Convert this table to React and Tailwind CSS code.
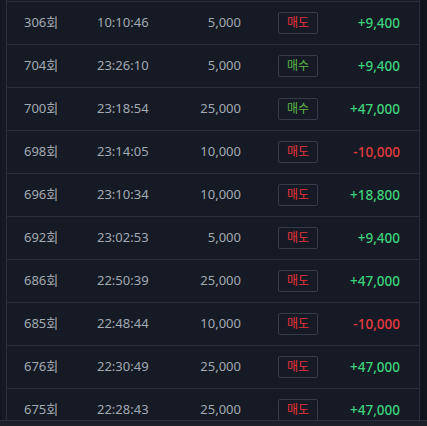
import React from "react";

const rows = [
  { no: "306회", time: "10:10:46", amount: "5,000", side: "매도", profit: "+9,400" },
  { no: "704회", time: "23:26:10", amount: "5,000", side: "매수", profit: "+9,400" },
  { no: "700회", time: "23:18:54", amount: "25,000", side: "매수", profit: "+47,000" },
  { no: "698회", time: "23:14:05", amount: "10,000", side: "매도", profit: "-10,000" },
  { no: "696회", time: "23:10:34", amount: "10,000", side: "매도", profit: "+18,800" },
  { no: "692회", time: "23:02:53", amount: "5,000", side: "매도", profit: "+9,400" },
  { no: "686회", time: "22:50:39", amount: "25,000", side: "매도", profit: "+47,000" },
  { no: "685회", time: "22:48:44", amount: "10,000", side: "매도", profit: "-10,000" },
  { no: "676회", time: "22:30:49", amount: "25,000", side: "매도", profit: "+47,000" },
  { no: "675회", time: "22:28:43", amount: "25,000", side: "매도", profit: "+47,000" },
];

const Row = ({ row }) => {
  const sell = row.side === "매도";
  const loss = row.profit.startsWith("-");
  return (
    <div className="flex items-center h-[43px] border-b border-[#2a303b] text-[13px] text-[#a3a9b3]">
      <div className="w-[90px] pl-[17px]">{row.no}</div>
      <div className="w-[80px]">{row.time}</div>
      <div className="w-[64px] text-right">{row.amount}</div>
      <div className="w-[94px] pl-[37px]">
        <span
          className={
            "flex items-center justify-center w-[40px] h-[22px] border border-[#363c47] rounded-[2px] text-[12px] " +
            (sell ? "text-[#e8333c]" : "text-[#5cb646]")
          }
        >
          {row.side}
        </span>
      </div>
      <div
        className={
          "flex-1 text-right pr-[19px] font-medium text-[13.5px] " +
          (loss ? "text-[#e83a3f]" : "text-[#3dd27c]")
        }
      >
        {row.profit}
      </div>
    </div>
  );
};

export default function App() {
  return (
    <div
      className="w-[427px] h-[426px] overflow-hidden bg-[#12161e] flex flex-col"
      style={{ fontFamily: "'Noto Sans', 'Noto Sans CJK KR', sans-serif" }}
    >
      <div className="flex h-[420px] overflow-hidden">
        <div className="w-[7px] border-l-[2px] border-l-[#12161e] bg-[#151a24] border-r border-r-[#2a303b]"></div>
        <div className="w-[412px] bg-[#151a24] pt-[1px]">
          <div className="border-t border-[#2a303b]">
            {rows.map((r, i) => (
              <Row key={i} row={r} />
            ))}
          </div>
        </div>
        <div className="w-[8px] border-l border-[#2a303b] bg-[#10141b]"></div>
      </div>
      <div className="flex-1 bg-[#1c2029] border-t border-[#2a303b]"></div>
    </div>
  );
}
